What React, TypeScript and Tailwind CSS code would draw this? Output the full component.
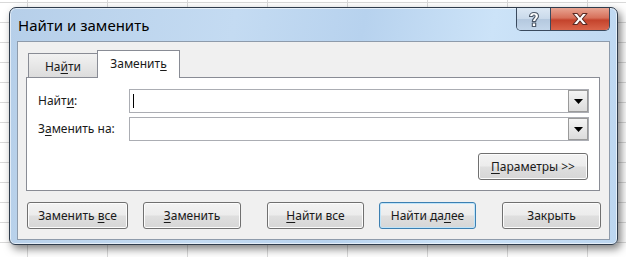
import type { ReactNode } from "react";

// Win7 style "Find and Replace" dialog over a spreadsheet grid

function U({ children }: { children: ReactNode }) {
  return <span className="underline underline-offset-[2px] decoration-[1px]">{children}</span>;
}

function Btn({ children, className = "", focused = false }: { children: ReactNode; className?: string; focused?: boolean }) {
  return (
    <button
      className={`h-[27px] rounded-[3px] border text-[12px] leading-none text-[#1a1a1a] ${
        focused
          ? "border-[#3c7fb1] shadow-[inset_0_0_0_1px_#bfe4f9]"
          : "border-[#707070] shadow-[inset_0_0_0_1px_#fcfcfc]"
      } bg-[linear-gradient(to_bottom,#f3f3f3_0%,#ececec_48%,#dfdfdf_52%,#d6d6d6_100%)] ${className}`}
    >
      {children}
    </button>
  );
}

function Combo({ caret = false }: { caret?: boolean }) {
  return (
    <div className="flex h-[24px] w-[460px] items-center border border-[#abadb3] bg-white">
      <div className="flex flex-1 items-center pl-[3px]">
        {caret && <div className="h-[14px] w-[1px] bg-black" />}
      </div>
      <div className="flex h-[22px] w-[20px] items-center justify-center border border-[#9a9a9a] bg-[linear-gradient(to_bottom,#f4f4f4,#dcdcdc)]">
        <svg width="9" height="5" viewBox="0 0 9 5">
          <path d="M0 0H9L4.5 5Z" fill="#000" />
        </svg>
      </div>
    </div>
  );
}

export default function App() {
  return (
    <div className="relative h-[257px] w-[626px] overflow-hidden bg-white bg-[linear-gradient(to_right,#d9d9d9_1px,transparent_1px),linear-gradient(to_bottom,#d9d9d9_1px,transparent_1px)] bg-[size:80px_20px] bg-[position:27px_2px] pl-[9px] pt-[7px] font-['Noto_Sans',sans-serif]">
      <div className="flex h-[238px] w-[609px] flex-col rounded-t-[7px] rounded-b-[6px] border border-[#2f3c4c] bg-[linear-gradient(100deg,#b6cfe9_0%,#c4dbf2_35%,#b7d2ee_55%,#cce3f8_75%,#bcd6f0_100%)] shadow-[3px_4px_8px_rgba(0,0,0,0.5),inset_0_0_0_1px_rgba(255,255,255,0.6)]">
        {/* title bar */}
        <div className="flex h-[33px] items-start">
          <div className="pl-[8px] pt-[10px] text-[15px] leading-none text-black">Найти и заменить</div>
          <div className="ml-auto mr-[7px] flex h-[23px] overflow-hidden rounded-b-[5px] border border-t-0 border-[#3a4a5e]">
            <div className="flex w-[34px] items-center justify-center border-r border-[#3a4a5e] bg-[linear-gradient(to_bottom,#dce8f4_0%,#c9d9ea_50%,#b4c8de_50%,#c3d6ea_100%)]">
              <svg width="14" height="17" viewBox="0 0 14 17">
                <path
                  d="M2.5 5.5C2.5 3 4.5 1.5 7 1.5S11.5 3 11.5 5.2c0 2.4-2.8 2.9-2.8 5.3H5.3c0-3.3 2.8-3.5 2.8-5.2 0-.8-.5-1.3-1.1-1.3-.7 0-1.2.6-1.2 1.5Z M5.3 12h3.4v3.5H5.3Z"
                  fill="#fff"
                  stroke="#4a5666"
                  strokeWidth="1.1"
                  strokeLinejoin="round"
                />
              </svg>
            </div>
            <div className="flex w-[58px] items-center justify-center bg-[linear-gradient(to_bottom,#e8a492_0%,#d7705a_45%,#c4432c_55%,#d9654b_100%)]">
              <svg width="18" height="14" viewBox="0 0 18 14">
                <path
                  d="M2 1.5h4.2L9 5l2.8-3.5H16L11.3 7 16 12.5h-4.2L9 9l-2.8 3.5H2L6.7 7Z"
                  fill="#fff"
                  stroke="#5a2a24"
                  strokeWidth="1.1"
                  strokeLinejoin="round"
                />
              </svg>
            </div>
          </div>
        </div>

        {/* client area */}
        <div className="mx-[7px] mb-[4px] flex flex-1 flex-col border border-[#8e9bab] bg-[#f0f0f0] text-[12px] text-[#1a1a1a]">
          {/* tabs */}
          <div className="ml-[10px] mt-[8px] flex h-[27px] items-end">
            <div className="relative top-[1px] flex h-[25px] w-[69px] items-center justify-center border border-r-0 border-[#898c95] bg-[linear-gradient(to_bottom,#f2f2f2,#dcdcdc)] pt-[2px]">
              На<U>й</U>ти
            </div>
            <div className="relative top-[1px] z-10 flex h-[28px] w-[83px] items-center justify-center border border-b-0 border-[#898c95] bg-white pb-[1px]">
              Заменит<U>ь</U>
            </div>
          </div>
          {/* tab pane */}
          <div className="ml-[8px] mr-[9px] flex h-[114px] flex-col border border-[#898c95] bg-white pl-[11px] pr-[10px]">
            <div className="mt-[11px] flex items-center">
              <div className="w-[91px]">
                Найт<U>и</U>:
              </div>
              <Combo caret />
            </div>
            <div className="mt-[4px] flex items-center">
              <div className="w-[91px]">
                З<U>а</U>менить на:
              </div>
              <Combo />
            </div>
            <div className="mt-[12px] flex justify-end pr-[1px]">
              <Btn className="h-[26px] w-[110px]">
                <U>П</U>араметры &gt;&gt;
              </Btn>
            </div>
          </div>
          {/* bottom buttons */}
          <div className="ml-[9px] mt-[11px] flex">
            <Btn className="w-[101px]">
              Заменить <U>в</U>се
            </Btn>
            <Btn className="ml-[15px] w-[98px]">
              <U>З</U>аменить
            </Btn>
            <Btn className="ml-[26px] w-[97px]">
              <U>Н</U>айти все
            </Btn>
            <Btn className="ml-[15px] w-[97px]" focused>
              Найти да<U>л</U>ее
            </Btn>
            <Btn className="ml-[26px] w-[99px]">Закрыть</Btn>
          </div>
        </div>
      </div>
    </div>
  );
}
